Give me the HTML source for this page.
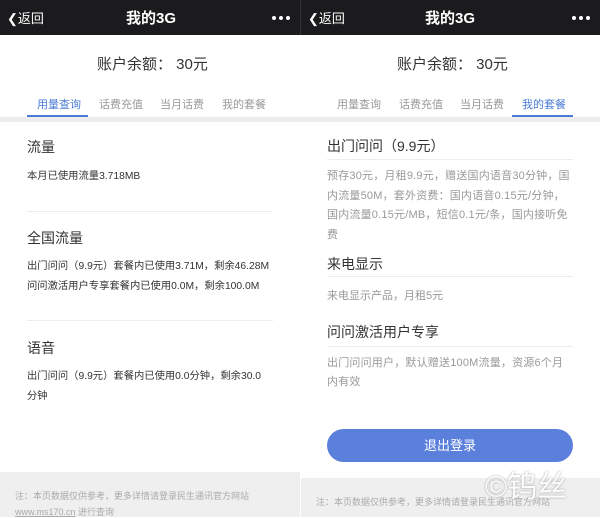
<!DOCTYPE html><html><head><meta charset="utf-8"><style>
*{margin:0;padding:0;box-sizing:border-box}
body{width:600px;height:517px;overflow:hidden;background:#fff;font-family:"Liberation Sans","Noto Sans CJK SC",sans-serif;position:relative}
.a{position:absolute;white-space:nowrap}
.hd{position:absolute;top:0;height:35px;background:#1b1b1d;color:#fff}
.t{font-size:14px;color:#333}
.s{font-size:10.3px;color:#333}
.g{font-size:11px;color:#999}
.ln{position:absolute;height:1px;background:#ececec}
.tab{font-size:11px;color:#999}
.ft{position:absolute;background:#efeff0}
.dots{position:absolute;top:16px;width:4px;height:4px;border-radius:2px;background:#fff}
</style></head><body>
<div class="hd" style="left:0;width:300px"></div>
<div class="hd" style="left:301px;width:299px"></div>
<div style="position:absolute;left:300px;top:0;width:1px;height:35px;background:#333"></div>
<div class="a" style="left:7px;top:8px;color:#fff;font-size:13px">❮返回</div>
<div class="a" style="left:126px;top:7px;color:#fff;font-size:15px;font-weight:bold">我的3G</div>
<div class="dots" style="left:272px"></div><div class="dots" style="left:279px"></div><div class="dots" style="left:286px"></div>
<div class="a" style="left:308px;top:8px;color:#fff;font-size:13px">❮返回</div>
<div class="a" style="left:425px;top:7px;color:#fff;font-size:15px;font-weight:bold">我的3G</div>
<div class="dots" style="left:572px"></div><div class="dots" style="left:579px"></div><div class="dots" style="left:586px"></div>
<div class="a" style="left:97px;top:53px;font-size:15px;color:#333">账户余额：&nbsp;30元</div>
<div class="a" style="left:397px;top:53px;font-size:15px;color:#333">账户余额：&nbsp;30元</div>
<div class="a tab" style="left:37px;top:96px;color:#4a7bd6">用量查询</div>
<div class="a tab" style="left:99px;top:96px">话费充值</div>
<div class="a tab" style="left:160px;top:96px">当月话费</div>
<div class="a tab" style="left:222px;top:96px">我的套餐</div>
<div style="position:absolute;left:27px;top:115px;width:61px;height:2px;background:#4a7bd6"></div>
<div class="a tab" style="left:337px;top:96px">用量查询</div>
<div class="a tab" style="left:399px;top:96px">话费充值</div>
<div class="a tab" style="left:460px;top:96px">当月话费</div>
<div class="a tab" style="left:522px;top:96px;color:#4a7bd6">我的套餐</div>
<div style="position:absolute;left:512px;top:115px;width:61px;height:2px;background:#4a7bd6"></div>
<div style="position:absolute;left:0;top:117px;width:600px;height:5px;background:#ededed"></div>
<div class="a t" style="left:27px;top:137px">流量</div>
<div class="a s" style="left:27px;top:167px">本月已使用流量3.718MB</div>
<div class="ln" style="left:27px;top:211px;width:246px"></div>
<div class="a t" style="left:27px;top:228px">全国流量</div>
<div class="a s" style="left:27px;top:257px">出门问问（9.9元）套餐内已使用3.71M，剩余46.28M</div>
<div class="a s" style="left:27px;top:277px">问问激活用户专享套餐内已使用0.0M，剩余100.0M</div>
<div class="ln" style="left:27px;top:320px;width:246px"></div>
<div class="a t" style="left:27px;top:338px">语音</div>
<div class="a s" style="left:27px;top:367px">出门问问（9.9元）套餐内已使用0.0分钟，剩余30.0</div>
<div class="a s" style="left:27px;top:387px">分钟</div>
<div class="ft" style="left:0;top:472px;width:300px;height:45px"></div>
<div class="a" style="left:15px;top:489px;font-size:9px;color:#aaa">注：本页数据仅供参考，更多详情请登录民生通讯官方网站</div>
<div class="a" style="left:15px;top:505px;font-size:9px;color:#aaa"><u>www.ms170.cn</u> 进行查询</div>
<div class="a t" style="left:327px;top:136px">出门问问（9.9元）</div>
<div class="ln" style="left:327px;top:159px;width:246px"></div>
<div class="a g" style="left:327px;top:167px;line-height:19.5px;white-space:normal;width:246px;letter-spacing:0.2px">预存30元，月租9.9元，赠送国内语音30分钟，国内流量50M，套外资费：国内语音0.15元/分钟，国内流量0.15元/MB，短信0.1元/条，国内接听免费</div>
<div class="a t" style="left:327px;top:254px">来电显示</div>
<div class="ln" style="left:327px;top:276px;width:246px"></div>
<div class="a g" style="left:327px;top:287px">来电显示产品，月租5元</div>
<div class="a t" style="left:327px;top:322px">问问激活用户专享</div>
<div class="ln" style="left:327px;top:346px;width:246px"></div>
<div class="a g" style="left:327px;top:354px;line-height:19px;white-space:normal;width:246px;letter-spacing:0.2px">出门问问用户，默认赠送100M流量，资源6个月内有效</div>
<div style="position:absolute;left:327px;top:429px;width:246px;height:33px;border-radius:17px;background:#5b80dc;color:#fff;font-size:13px;text-align:center;line-height:33px">退出登录</div>
<div class="ft" style="left:301px;top:478px;width:299px;height:39px"></div>
<div class="a" style="left:316px;top:495px;font-size:9px;color:#aaa">注：本页数据仅供参考，更多详情请登录民生通讯官方网站</div>
<div class="a" style="left:485px;top:462px;font-size:30px;color:#fff;opacity:.85;text-shadow:0 0 2px #888">©钨丝</div>
</body></html>
